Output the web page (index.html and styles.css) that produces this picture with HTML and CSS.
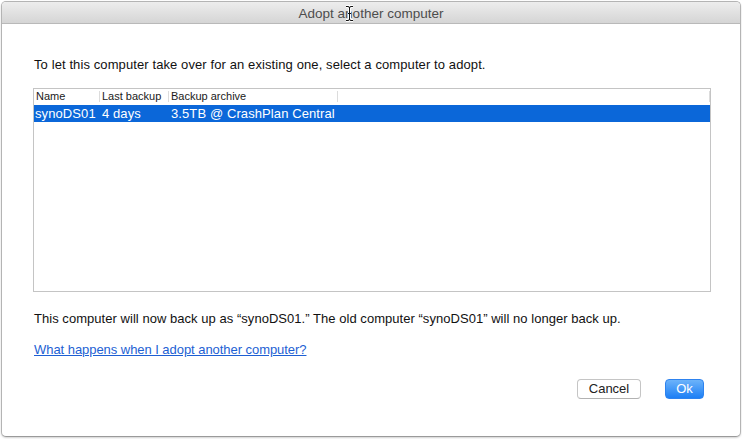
FILE: index.html
```html
<!DOCTYPE html>
<html>
<head>
<meta charset="utf-8">
<link rel="stylesheet" href="styles.css">
</head>
<body>
<div class="window">
  <div class="titlebar">
    <span class="title">Adopt another computer</span>
    <svg class="cursor" width="9" height="17" viewBox="0 0 9 17">
      <path d="M1 1.5 H3 Q4.5 1.5 4.5 3 Q4.5 1.5 6 1.5 H8 M4.5 3 V14 M1 15.5 H3 Q4.5 15.5 4.5 14 Q4.5 15.5 6 15.5 H8 M3 8.5 H6" fill="none" stroke="#fff" stroke-width="3"/>
      <path d="M1 1.5 H3 Q4.5 1.5 4.5 3 Q4.5 1.5 6 1.5 H8 M4.5 3 V14 M1 15.5 H3 Q4.5 15.5 4.5 14 Q4.5 15.5 6 15.5 H8 M3 8.5 H6" fill="none" stroke="#111" stroke-width="1"/>
    </svg>
  </div>
  <div class="content">
    <p class="intro">To let this computer take over for an existing one, select a computer to adopt.</p>
    <div class="table">
      <div class="thead">
        <div class="th c1">Name</div>
        <div class="th c2">Last backup</div>
        <div class="th c3">Backup archive</div>
        <div class="th c4"></div>
      </div>
      <div class="row selected">
        <div class="td c1">synoDS01</div>
        <div class="td c2">4 days</div>
        <div class="td c3">3.5TB @ CrashPlan Central</div>
      </div>
    </div>
    <p class="note">This computer will now back up as “synoDS01.” The old computer “synoDS01” will no longer back up.</p>
    <p class="linkline"><a class="link" href="#">What happens when I adopt another computer?</a></p>
    <div class="buttons">
      <button class="btn cancel">Cancel</button>
      <button class="btn ok">Ok</button>
    </div>
  </div>
</div>
</body>
</html>
```
FILE: styles.css
```css
html, body {
  margin: 0;
  padding: 0;
  background: #ffffff;
}
body {
  font-family: "Liberation Sans", Arial, sans-serif;
  font-size: 13px;
  color: #111;
  padding: 1px 0 0 1px;
  width: 742px;
  height: 439px;
  box-sizing: border-box;
  overflow: hidden;
}
.window {
  width: 740px;
  height: 436px;
  box-sizing: border-box;
  border: 1px solid #b4b4b4;
  border-bottom-color: #9a9a9a;
  border-radius: 5px;
  background: #fff;
  overflow: hidden;
  display: flex;
  flex-direction: column;
  box-shadow: 0 1px 2px rgba(0,0,0,0.18);
}
.titlebar {
  position: relative;
  height: 21px;
  flex: none;
  border-bottom: 1px solid #b9b9b9;
  background: linear-gradient(#ededed, #d5d5d5);
  display: flex;
  align-items: center;
  justify-content: center;
}
.title {
  font-size: 13.5px;
  color: #4d4d4d;
  padding-top: 1px;
}
.cursor {
  position: absolute;
  left: 343px;
  top: 3px;
}
.content {
  padding: 0 29px 0 31px;
  display: flex;
  flex-direction: column;
}
.intro {
  margin: 33px 0 0 1px;
  line-height: 16px;
  letter-spacing: 0.1px;
}
.table {
  margin-top: 15px;
  height: 204px;
  box-sizing: border-box;
  border: 1px solid #c4c4c4;
  display: flex;
  flex-direction: column;
}
.thead {
  display: flex;
  height: 16px;
  align-items: center;
  font-size: 11px;
  color: #1a1a1a;
}
.th {
  height: 16px;
  line-height: 15px;
  box-sizing: border-box;
  padding-left: 2px;
  white-space: nowrap;
  overflow: hidden;
  background: linear-gradient(#dcdcdc, #dcdcdc) right 2px / 1px 11px no-repeat;
}
.c1 { width: 66px; }
.c2 { width: 69px; }
.c3 { width: 169px; }
.c4 { width: 0; flex: 1; }
.row {
  display: flex;
  height: 17px;
  align-items: center;
}
.row.selected {
  background: #0b67d9;
  color: #fff;
}
.td {
  box-sizing: border-box;
  flex: none;
  padding-left: 1px;
  white-space: nowrap;
  line-height: 17px;
  font-size: 13px;
  letter-spacing: 0.1px;
}
.td.c2, .td.c3 { padding-left: 2px; }
.note {
  margin: 19px 0 0 1px;
  line-height: 16px;
  letter-spacing: 0.04px;
}
.linkline {
  margin: 15px 0 0 1px;
  line-height: 16px;
}
.link {
  color: #1d5fd3;
  text-decoration: underline;
  letter-spacing: -0.05px;
}
.buttons {
  margin-top: 21px;
  display: flex;
  justify-content: flex-end;
  gap: 24px;
  padding-right: 7px;
}
.btn {
  font-family: "Liberation Sans", Arial, sans-serif;
  font-size: 13px;
  height: 20px;
  box-sizing: border-box;
  border-radius: 4px;
  padding: 0;
  line-height: 18px;
}
.cancel {
  width: 64px;
  background: #fff;
  border: 1px solid #c5c5c5;
  border-bottom-color: #b2b2b2;
  color: #222;
}
.ok {
  width: 39px;
  border: 1px solid #2e83ef;
  background: linear-gradient(#6cb3fa, #1d7ff5);
  color: #fff;
}
```
